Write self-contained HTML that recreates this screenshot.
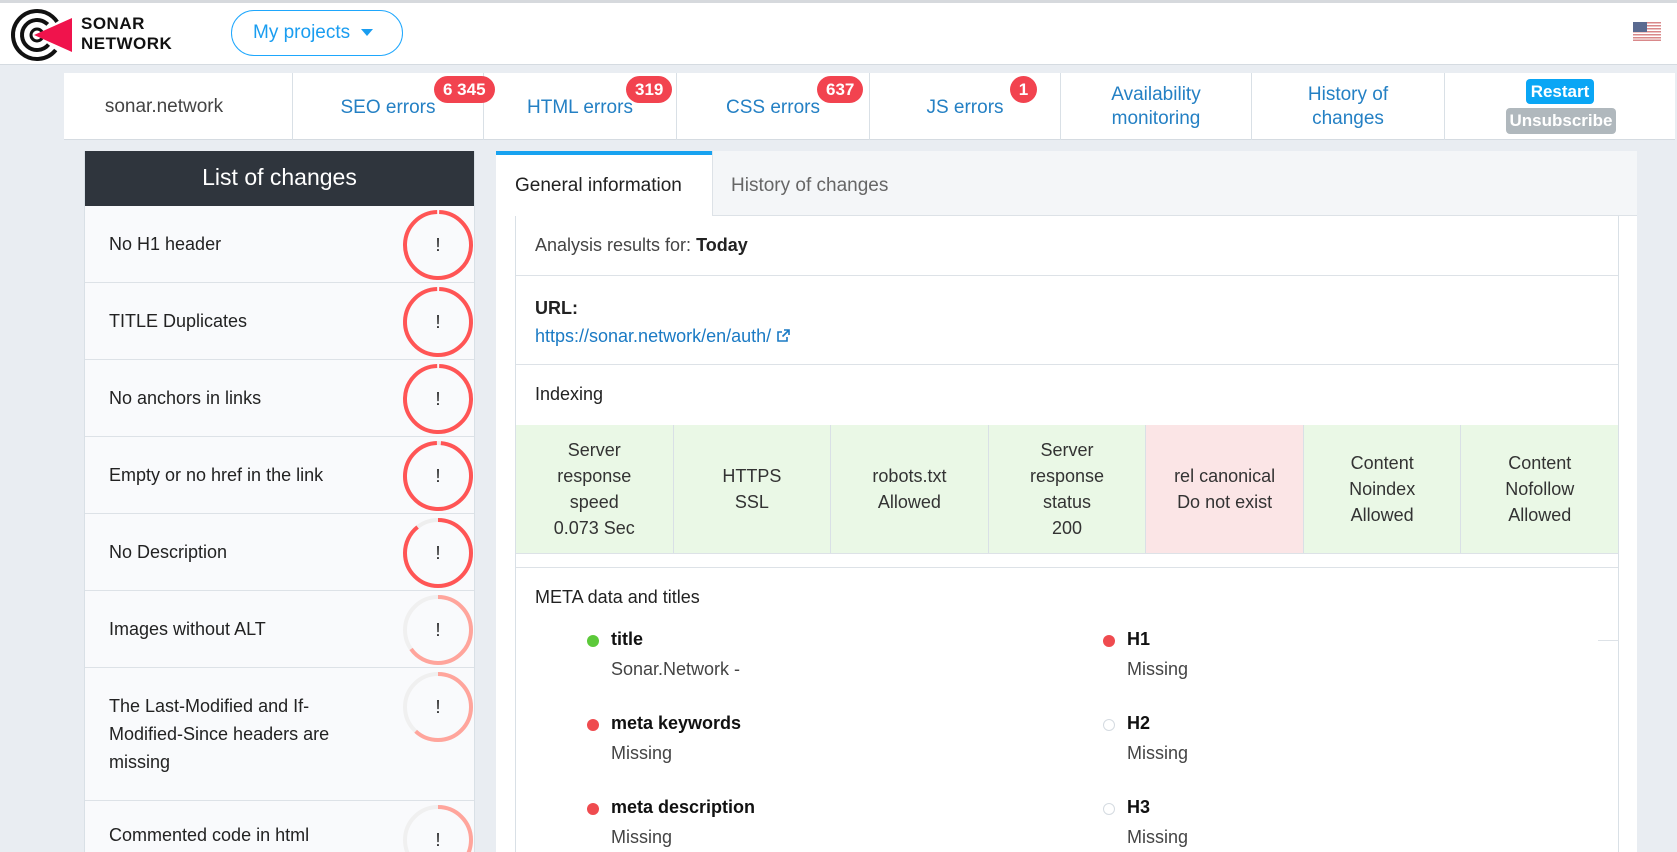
<!DOCTYPE html>
<html><head><meta charset="utf-8"><style>
*{box-sizing:border-box;margin:0;padding:0}
html{width:1677px;height:852px;overflow:hidden}
body{width:1677px;height:852px;overflow:hidden;background:#e9edf2;font-family:"Liberation Sans",sans-serif;color:#333;position:relative}
.abs{position:absolute}
.top{left:0;top:0;width:1677px;height:3px;background:#d6d9dd}
.hdr{left:0;top:3px;width:1677px;height:62px;background:#fff;border-bottom:1px solid #d5dbe1}
.nav{left:64px;top:73px;width:1611px;height:67px;background:#fff;border-bottom:1px solid #d5dbe1}
.cell{position:absolute;top:0;height:67px;border-right:1px solid #d9e0e6;display:flex;align-items:center;justify-content:center;text-align:center;font-size:19px;color:#2480c4;line-height:24px}
.badge{position:absolute;background:#f2434f;color:#fff;font-size:17px;font-weight:bold;height:27px;border-radius:14px;padding:0 9px;line-height:27px}
.lp{left:84px;top:151px;width:391px;height:701px;overflow:hidden;background:#f9fafc;border-right:1px solid #d9e0e6;border-left:1px solid #d9e0e6}
.lh{height:55px;background:#2f353d;color:#fff;font-size:23px;text-align:center;line-height:53px}
.row{position:relative;height:77px;border-bottom:1px solid #dde2e7;font-size:18px;color:#222}
.row .t{position:absolute;left:24px;top:24px;line-height:28px}
.row svg{position:absolute;left:316px;top:2px}
.rp{left:496px;top:151px;width:1141px;height:701px;overflow:hidden;background:#fff}
.tabs{height:65px;background:#f4f6f8;border-bottom:1px solid #dde2e7;position:relative}
.box{position:absolute;left:19px;top:65px;width:1104px;height:636px;border:1px solid #d9e0e6;border-top:none;border-bottom:none}
.sec{border-bottom:1px solid #dde2e7;position:relative}
.g{display:flex;height:129px;border-bottom:1px solid #dde2e7}
.g div{flex:1;border-right:1px solid #d9e0e6;background:#eaf8e6;display:flex;align-items:center;justify-content:center;text-align:center;font-size:18px;line-height:26px;color:#333}
.mi{position:absolute;font-size:18px}
.mi b{display:block;color:#111;font-weight:bold}
.mi span{display:block;margin-top:9px;color:#444}
.dot{position:absolute;left:-24px;top:6px;width:12px;height:12px;border-radius:50%}
</style></head><body>
<div class="abs top"></div>
<div class="abs hdr"></div>
<svg class="abs" style="left:10px;top:8px" width="62" height="55" viewBox="0 0 62 55">
<circle cx="27" cy="27" r="24" fill="none" stroke="#111" stroke-width="4" stroke-dasharray="120 30" transform="rotate(40 27 27)"/>
<circle cx="27" cy="27" r="15" fill="none" stroke="#111" stroke-width="4" stroke-dasharray="72 22" transform="rotate(40 27 27)"/>
<circle cx="27" cy="27" r="6" fill="none" stroke="#111" stroke-width="3"/>
<polygon points="24,27 62,10 62,44" fill="#f0134c"/>
</svg>
<div class="abs" style="left:81px;top:14px;font-size:17px;font-weight:bold;line-height:20px;color:#111;letter-spacing:.5px">SONAR<br>NETWORK</div>
<div class="abs" style="left:231px;top:10px;width:172px;height:46px;border:1.5px solid #1ea7fd;border-radius:23px;color:#1a9df0;font-size:19px;line-height:43px;padding-left:21px">My projects <span style="display:inline-block;width:0;height:0;border-left:6px solid transparent;border-right:6px solid transparent;border-top:7px solid #1a9df0;vertical-align:middle;margin-left:6px"></span></div>
<svg class="abs" style="left:1633px;top:22px" width="28" height="19"><rect width="28" height="19" fill="#fff"/><g fill="#d9888a"><rect y="0" width="28" height="1.5"/><rect y="3" width="28" height="1.5"/><rect y="6" width="28" height="1.5"/><rect y="9" width="28" height="1.5"/><rect y="12" width="28" height="1.5"/><rect y="15" width="28" height="1.5"/><rect y="17.5" width="28" height="1.5"/></g><rect width="14" height="10" fill="#5a6a90"/></svg>

<div class="abs nav">
<div class="cell" style="left:0;width:229px;color:#444;padding-right:28px">sonar.network</div>
<div class="cell" style="left:229px;width:191px;padding-top:2px">SEO errors</div>
<div class="cell" style="left:420px;width:193px;padding-top:2px">HTML errors</div>
<div class="cell" style="left:613px;width:193px;padding-top:2px">CSS errors</div>
<div class="cell" style="left:806px;width:191px;padding-top:2px">JS errors</div>
<div class="cell" style="left:997px;width:191px">Availability<br>monitoring</div>
<div class="cell" style="left:1188px;width:193px">History of<br>changes</div>
<div class="cell" style="left:1381px;width:230px;border:none"></div>
<div class="badge" style="left:370px;top:3px">6 345</div>
<div class="badge" style="left:562px;top:3px">319</div>
<div class="badge" style="left:753px;top:3px">637</div>
<div class="badge" style="left:946px;top:3px;width:27px;padding:0;text-align:center">1</div>
<div class="abs" style="left:1462px;top:6px;width:68px;height:25px;background:#0aa6f5;color:#fff;border-radius:4px;font-size:17px;font-weight:bold;text-align:center;line-height:25px">Restart</div>
<div class="abs" style="left:1442px;top:35px;width:110px;height:26px;background:#b0b8bd;color:#fff;border-radius:4px;font-size:17px;font-weight:bold;text-align:center;line-height:26px">Unsubscribe</div>
</div>

<div class="abs lp">
<div class="lh">List of changes</div>
<div class="row"><div class="t">No H1 header</div><svg width="74" height="74"><circle cx="37" cy="37" r="33" fill="none" stroke="#ff5555" stroke-width="4" stroke-dasharray="205 2.5" transform="rotate(-88 37 37)"/><text x="37" y="43" text-anchor="middle" font-size="18" fill="#222" font-family="Liberation Sans">!</text></svg></div>
<div class="row"><div class="t">TITLE Duplicates</div><svg width="74" height="74"><circle cx="37" cy="37" r="33" fill="none" stroke="#ff5555" stroke-width="4" stroke-dasharray="205 2.5" transform="rotate(-88 37 37)"/><text x="37" y="43" text-anchor="middle" font-size="18" fill="#222" font-family="Liberation Sans">!</text></svg></div>
<div class="row"><div class="t">No anchors in links</div><svg width="74" height="74"><circle cx="37" cy="37" r="33" fill="none" stroke="#ff5555" stroke-width="4" stroke-dasharray="205 2.5" transform="rotate(-88 37 37)"/><text x="37" y="43" text-anchor="middle" font-size="18" fill="#222" font-family="Liberation Sans">!</text></svg></div>
<div class="row"><div class="t">Empty or no href in the link</div><svg width="74" height="74"><circle cx="37" cy="37" r="33" fill="none" stroke="#eee" stroke-width="4"/><circle cx="37" cy="37" r="33" fill="none" stroke="#ff5555" stroke-width="4" stroke-dasharray="203 5" transform="rotate(-85 37 37)"/><text x="37" y="43" text-anchor="middle" font-size="18" fill="#222" font-family="Liberation Sans">!</text></svg></div>
<div class="row"><div class="t">No Description</div><svg width="74" height="74"><circle cx="37" cy="37" r="33" fill="none" stroke="#eee" stroke-width="4"/><circle cx="37" cy="37" r="33" fill="none" stroke="#ff5555" stroke-width="4" stroke-dasharray="185 30" transform="rotate(-90 37 37)"/><text x="37" y="43" text-anchor="middle" font-size="18" fill="#222" font-family="Liberation Sans">!</text></svg></div>
<div class="row"><div class="t">Images without ALT</div><svg width="74" height="74"><circle cx="37" cy="37" r="33" fill="none" stroke="#f0f0f0" stroke-width="4"/><circle cx="37" cy="37" r="33" fill="none" stroke="#ffa59c" stroke-width="4" stroke-dasharray="135 80" transform="rotate(-90 37 37)"/><text x="37" y="43" text-anchor="middle" font-size="18" fill="#222" font-family="Liberation Sans">!</text></svg></div>
<div class="row" style="height:133px"><div class="t">The Last-Modified and If-<br>Modified-Since headers are<br>missing</div><svg width="74" height="74"><circle cx="37" cy="37" r="33" fill="none" stroke="#f0f0f0" stroke-width="4"/><circle cx="37" cy="37" r="33" fill="none" stroke="#ffa59c" stroke-width="4" stroke-dasharray="128 90" transform="rotate(-90 37 37)"/><text x="37" y="43" text-anchor="middle" font-size="18" fill="#222" font-family="Liberation Sans">!</text></svg></div>
<div class="row"><div class="t" style="top:20px">Commented code in html</div><svg width="74" height="74" style="top:2px"><circle cx="37" cy="37" r="33" fill="none" stroke="#f0f0f0" stroke-width="4"/><circle cx="37" cy="37" r="33" fill="none" stroke="#ffa59c" stroke-width="4" stroke-dasharray="128 90" transform="rotate(-90 37 37)"/><text x="37" y="43" text-anchor="middle" font-size="18" fill="#222" font-family="Liberation Sans">!</text></svg></div>
</div>

<div class="abs rp">
<div class="tabs">
<div class="abs" style="left:0;top:0;width:216px;height:66px;background:#fff;border-top:4px solid #17a2f0;font-size:19px;color:#222;padding:20px 0 0 19px">General information</div>
<div class="abs" style="left:216px;top:0;height:65px;border-left:1px solid #dde2e7;font-size:19px;color:#666;padding:24px 0 0 18px">History of changes</div>
</div>
<div class="box">
<div class="sec" style="height:60px;font-size:18px;padding:19px 0 0 19px;color:#444">Analysis results for: <b style="color:#222;font-weight:bold">Today</b></div>
<div class="sec" style="height:89px;font-size:18px;padding:18px 0 0 19px;line-height:28px"><b style="color:#222">URL:</b><br><span style="color:#1a7ac4">https://sonar.network/en/auth/ <svg width="15" height="15" viewBox="0 0 15 15" style="vertical-align:-1px"><path d="M8 2h5v5M13 2L6.5 8.5M11 9v4H2V4h4" fill="none" stroke="#1a7ac4" stroke-width="1.6"/></svg></span></div>
<div class="sec" style="height:60px;font-size:18px;padding:19px 0 0 19px;color:#222;border:none">Indexing</div>
<div class="g">
<div>Server<br>response<br>speed<br>0.073 Sec</div>
<div>HTTPS<br>SSL</div>
<div>robots.txt<br>Allowed</div>
<div>Server<br>response<br>status<br>200</div>
<div style="background:#fbe5e6">rel canonical<br>Do not exist</div>
<div>Content<br>Noindex<br>Allowed</div>
<div style="border-right:none">Content<br>Nofollow<br>Allowed</div>
</div>
<div style="height:14px;border-bottom:1px solid #dde2e7"></div>
<div class="abs" style="left:19px;top:371px;font-size:18px;color:#222">META data and titles</div>
<div class="abs" style="left:1082px;top:424px;width:21px;height:1px;background:#dde2e7"></div>
<div class="mi" style="left:95px;top:413px"><i class="dot" style="background:#5cc93a"></i><b>title</b><span>Sonar.Network -</span></div>
<div class="mi" style="left:95px;top:497px"><i class="dot" style="background:#ef4b4f"></i><b>meta keywords</b><span>Missing</span></div>
<div class="mi" style="left:95px;top:581px"><i class="dot" style="background:#ef4b4f"></i><b>meta description</b><span>Missing</span></div>
<div class="mi" style="left:611px;top:413px"><i class="dot" style="background:#ef4b4f"></i><b>H1</b><span>Missing</span></div>
<div class="mi" style="left:611px;top:497px"><i class="dot" style="border:1px solid #d5dbe1"></i><b>H2</b><span>Missing</span></div>
<div class="mi" style="left:611px;top:581px"><i class="dot" style="border:1px solid #d5dbe1"></i><b>H3</b><span>Missing</span></div>
</div>
</div>
</body></html>
